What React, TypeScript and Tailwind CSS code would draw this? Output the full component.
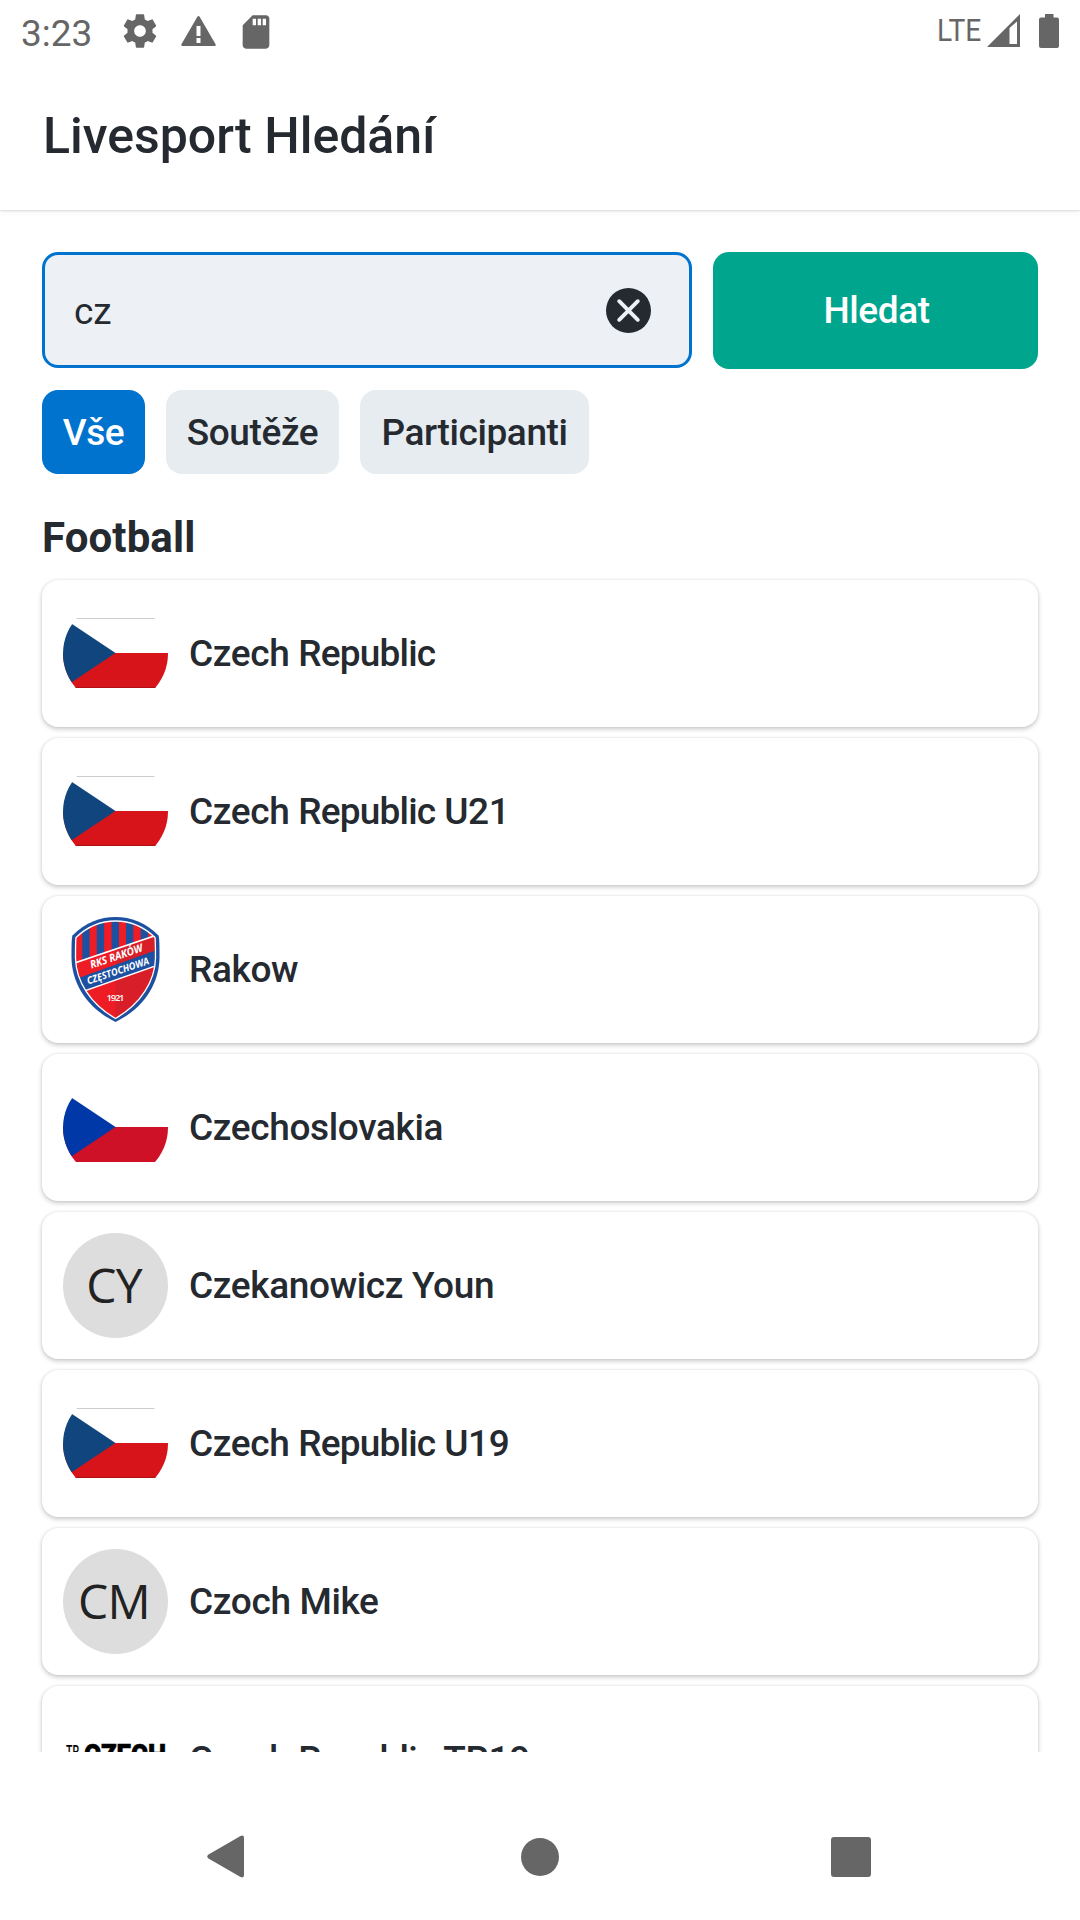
import React from 'react';

type Logo = 'cz' | 'cs' | 'rakow' | 'tr' | string;

const teams: { name: string; logo: Logo }[] = [
  { name: 'Czech Republic', logo: 'cz' },
  { name: 'Czech Republic U21', logo: 'cz' },
  { name: 'Rakow', logo: 'rakow' },
  { name: 'Czechoslovakia', logo: 'cs' },
  { name: 'Czekanowicz Youn', logo: 'CY' },
  { name: 'Czech Republic U19', logo: 'cz' },
  { name: 'Czoch Mike', logo: 'CM' },
  { name: 'Czech Republic TR19', logo: 'tr' },
];

function Flag({ blue, red, edged }: { blue: string; red: string; edged: boolean }) {
  return (
    <div className="size-[105px] shrink-0 overflow-hidden rounded-full pt-[17px]">
      <svg width="105" height="70" viewBox="0 0 105 70">
        <rect width="105" height="70" fill="#fff" />
        <rect y="35" width="105" height="35" fill={red} />
        <path d="M0 0L52.5 35L0 70Z" fill={blue} />
        {edged && <rect width="105" height="1" fill="#ccc" />}
        {edged && <rect y="69" width="105" height="1" fill="#b01015" />}
      </svg>
    </div>
  );
}

function RakowCrest() {
  return (
    <svg className="size-[105px] shrink-0" viewBox="0 0 105 105">
      <defs>
        <clipPath id="crest">
          <path d="M52.5 4C67 4 80 9 92 20.500C92.500 24 92.500 32 92.500 41C92 64 78 87 52.500 101.500C27 87 13 64 12.500 41C12.500 32 12.500 24 13 20.500C25 9 38 4 52.500 4Z" />
        </clipPath>
      </defs>
      <path
        d="M52.500 0C68 0 83 5.500 95.500 18.500C96.500 21 96.500 30 96.500 41C96 67 81 91 52.500 105C24 91 9 67 8.500 41C8.500 30 8.500 21 9.500 18.500C22 5.500 37 0 52.500 0Z"
        fill="#1c50a0"
      />
      <g clipPath="url(#crest)">
        <rect width="105" height="105" fill="#ee1c25" />
        <g fill="#1c50a0">
          <rect x="19.300" width="7.300" height="60" />
          <rect x="33.800" width="7.300" height="60" />
          <rect x="48.600" width="7.300" height="60" />
          <rect x="63" width="7.300" height="60" />
          <rect x="77.700" width="7.300" height="60" />
        </g>
        <path d="M0 50L105 14.300V105H0Z" fill="#ee1c25" />
        <path d="M52.500 32.200L105 14.300V105H52.500Z" fill="#d81f29" />
        <path d="M0 66.500L105 29V44.500L0 81.500Z" fill="#1c50a0" />
        <path d="M0 50L105 14.300M0 81.500L105 44.500" stroke="#fff" strokeWidth="1.600" />
      </g>
      <path
        d="M52.500 4C67 4 80 9 92 20.500C92.500 24 92.500 32 92.500 41C92 64 78 87 52.500 101.500C27 87 13 64 12.500 41C12.500 32 12.500 24 13 20.500C25 9 38 4 52.500 4Z"
        fill="none"
        stroke="#fff"
        strokeWidth="1.300"
      />
      <g fill="#fff" fontFamily="Open Sans, sans-serif" textAnchor="middle">
        <text fontSize="10.800" fontWeight="700" fontStyle="italic" textLength="55" lengthAdjust="spacingAndGlyphs" transform="translate(54.500 42.800) rotate(-18.700)">
          RKS RAKÓW
        </text>
        <text fontSize="10" fontWeight="700" fontStyle="italic" textLength="65" lengthAdjust="spacingAndGlyphs" transform="translate(56 57.200) rotate(-18.700)">
          CZĘSTOCHOWA
        </text>
        <text x="52.500" y="84" fontSize="9.500" fontWeight="600" textLength="18">
          1921
        </text>
      </g>
    </svg>
  );
}

function TeamLogo({ logo }: { logo: Logo }) {
  if (logo === 'cz') return <Flag blue="#11457e" red="#d7141a" edged />;
  if (logo === 'cs') return <Flag blue="#0038a8" red="#ce1126" edged={false} />;
  if (logo === 'rakow') return <RakowCrest />;
  if (logo === 'tr')
    return (
      <svg className="size-[105px] shrink-0" viewBox="0 0 105 105" fontFamily="Roboto, sans-serif">
        <text x="3" y="50" fontSize="17" fontWeight="500" textLength="13" lengthAdjust="spacingAndGlyphs">
          TR
        </text>
        <text x="21" y="58" fontSize="29" fontWeight="900" textLength="82" lengthAdjust="spacingAndGlyphs" stroke="#000" strokeWidth=".6">
          CZECH
        </text>
      </svg>
    );
  return (
    <div className="flex size-[105px] shrink-0 items-center justify-center rounded-full bg-[#ddd] pr-[3px] pb-[2px] font-['Open_Sans'] text-[48px] leading-none tracking-[-0.8px] text-[#222]">
      <span>{logo}</span>
    </div>
  );
}

function TeamName({ name }: { name: string }) {
  return (
    <span className="text-[37px] leading-[44px] font-medium tracking-[-0.35px] whitespace-pre">
      {name.split(/(Republic)/).map((part, i) =>
        part === 'Republic' ? (
          <span key={i} className="tracking-[-0.8px]">
            {part}
          </span>
        ) : (
          part
        ),
      )}
    </span>
  );
}

function StatusBar() {
  return (
    <div className="flex h-[63px] items-start justify-between pr-[21px] pl-[21px] text-[#666]">
      <div className="flex items-start">
        <span className="mt-[12px] w-[99px] text-[37px] leading-[43px]">3:23</span>
        <svg className="mt-[11px] size-[40px]" viewBox="0 0 24 24" fill="currentColor">
          <path d="M19.430 12.980c.04-.32.07-.64.07-.98s-.03-.66-.07-.98l2.110-1.650c.19-.15.24-.42.12-.64l-2-3.460c-.12-.22-.39-.3-.61-.22l-2.490 1c-.52-.4-1.080-.73-1.690-.98l-.38-2.650C14.460 2.180 14.250 2 14 2h-4c-.25 0-.46.18-.49.42l-.38 2.650c-.61.25-1.170.59-1.690.98l-2.490-1c-.23-.09-.49 0-.61.22l-2 3.460c-.13.22-.07.49.12.64l2.110 1.650c-.04.32-.07.65-.07.98s.03.66.07.98l-2.110 1.650c-.19.15-.24.42-.12.64l2 3.460c.12.22.39.3.61.22l2.490-1c.52.4 1.080.73 1.690.98l.38 2.650c.03.24.24.42.49.42h4c.25 0 .46-.18.49-.42l.38-2.650c.61-.25 1.170-.59 1.690-.98l2.490 1c.23.09.49 0 .61-.22l2-3.460c.12-.22.07-.49-.12-.64l-2.110-1.650zM12 15.500c-1.930 0-3.500-1.570-3.500-3.500s1.570-3.500 3.500-3.500 3.500 1.570 3.500 3.500-1.570 3.500-3.500 3.500z" />
        </svg>
        <svg className="mt-4 ml-[20.500px] h-[30px] w-[35px]" viewBox="0 0 35 30" fill="currentColor">
          <path
            fillRule="evenodd"
            d="M16.500 .6Q17.500 -.6 18.500 .6L34.700 28.500Q35 30 33.500 30H1.500Q0 30 .3 28.500ZM15.500 10V20H19.500V10ZM15.500 22V27H19.500V22Z"
          />
        </svg>
        <svg className="mt-[12px] ml-[20.500px] size-[40px]" viewBox="0 0 24 24" fill="currentColor">
          <path d="M18 2h-8L4.020 8 4 20c0 1.100.9 2 2 2h12c1.100 0 2-.9 2-2V4c0-1.100-.9-2-2-2zm-6 6h-2V4h2v4zm3 0h-2V4h2v4zm3 0h-2V4h2v4z" />
        </svg>
      </div>
      <div className="flex items-start">
        <span className="mt-[10px] mr-[6px] origin-right scale-x-[0.88] text-[32px] leading-[40px]">LTE</span>
        <svg className="mt-[14px] mr-[19px] h-[33px] w-[33px]" viewBox="0 0 33 33" fill="currentColor">
          <path fillRule="evenodd" d="M0 33L33 0V33ZM22.500 14V30H30V7.500Z" />
        </svg>
        <svg className="mt-[14px] h-[34px] w-5" viewBox="0 0 20 34" fill="currentColor">
          <path d="M6 0H14.500V3.500H18Q20 3.500 20 5.500V32Q20 34 18 34H2Q0 34 0 32V5.500Q0 3.500 2 3.500H6Z" />
        </svg>
      </div>
    </div>
  );
}

export default function App() {
  return (
    <div className="flex h-[1920px] w-[1080px] flex-col overflow-hidden bg-white font-[Roboto,sans-serif] text-[#252a30]">
      <header className="h-[210px] shrink-0 shadow-[0_1px_2px_rgba(0,0,0,0.13),0_2px_8px_rgba(0,0,0,0.04)]">
        <StatusBar />
        <h1 className="mt-[43px] ml-[43px] text-[50px] leading-[60px] font-medium">Livesport Hledání</h1>
      </header>

      <main className="flex h-[1542px] shrink-0 flex-col overflow-hidden px-[42px] pt-[42px]">
        <div className="flex shrink-0 items-start gap-[21px]">
          <div className="flex h-[116px] w-[650px] items-center justify-between rounded-[16px] border-[3px] border-[#0073cf] bg-[#edf1f5] pr-[38px] pl-[29px]">
            <span className="mt-[4px] text-[37px] leading-[44px]">cz</span>
            <svg className="size-[45px]" viewBox="0 0 45 45">
              <circle cx="22.500" cy="22.500" r="22.500" fill="#252a30" />
              <path d="M13.200 13.200L31.800 31.800M31.800 13.200L13.200 31.800" stroke="#edf1f5" strokeWidth="3.900" strokeLinecap="round" />
            </svg>
          </div>
          <button className="h-[117px] flex-1 rounded-[16px] bg-[#00a58e] pl-[2px] text-[37px] font-medium tracking-[-0.4px] text-white">Hledat</button>
        </div>

        <div className="mt-[21px] flex h-[84px] shrink-0 gap-[21px] text-[37px] font-medium tracking-[-0.4px]">
          <button className="w-[103px] rounded-[16px] bg-[#0073cf] pt-[2px] text-white">Vše</button>
          <button className="w-[173px] rounded-[16px] bg-[#e7ecf0] pt-[2px]">Soutěže</button>
          <button className="w-[229px] rounded-[16px] bg-[#e7ecf0] pt-[2px]">Participanti</button>
        </div>

        <h2 className="mt-[39px] h-[67px] shrink-0 text-[42px] leading-[50px] font-bold tracking-[0.1px]">Football</h2>

        <ul className="flex shrink-0 flex-col gap-[11px]">
          {teams.map((team) => (
            <li
              key={team.name}
              className="flex h-[147px] items-center gap-[21px] rounded-[16px] bg-white px-[21px] shadow-[0_2px_5px_rgba(0,0,0,0.22),0_0_2px_rgba(0,0,0,0.1)]"
            >
              <TeamLogo logo={team.logo} />
              <TeamName name={team.name} />
            </li>
          ))}
        </ul>
      </main>

      <nav className="flex h-[168px] items-start pt-[83px] text-[#666]">
        <svg className="ml-[207px] h-[43px] w-[37px]" viewBox="0 0 37 43" fill="currentColor">
          <path d="M1.500 19.500L33.500 1Q37 -.5 37 3V40Q37 43.500 33.500 42L1.500 23.500Q-1 21.500 1.500 19.500Z" />
        </svg>
        <div className="mt-[3px] ml-[277px] size-[38px] rounded-full bg-[#666]" />
        <div className="mt-[2px] ml-[272px] h-[40px] w-[40px] rounded-[3px] bg-[#666]" />
      </nav>
    </div>
  );
}
